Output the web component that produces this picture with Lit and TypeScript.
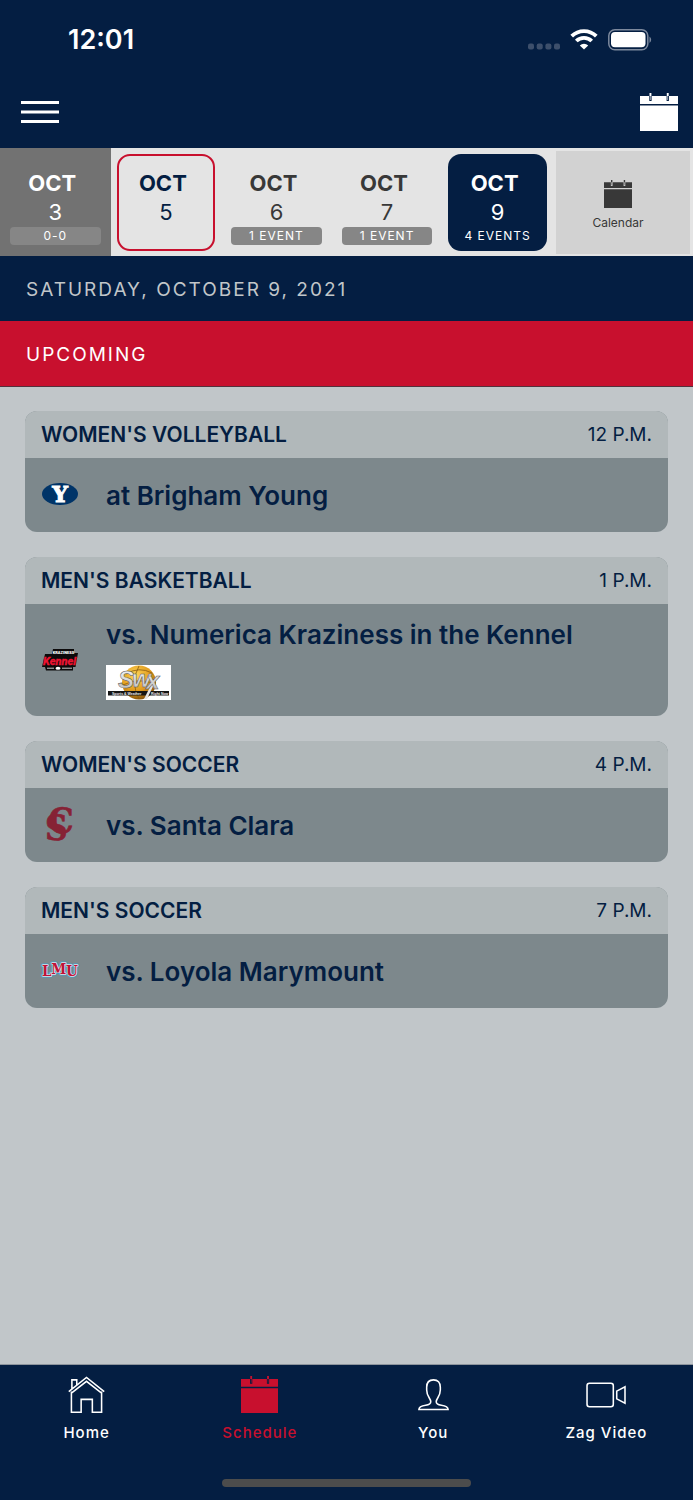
import { LitElement, html, svg, css, nothing, TemplateResult } from "lit";
import { customElement, property, state } from "lit/decorators.js";
import { classMap } from "lit/directives/class-map.js";

interface Day {
  month: string;
  date: number;
  note: string;
  kind: "past" | "today" | "plain";
}

interface Game {
  sport: string;
  time: string;
  opponent: string;
  logo: TemplateResult;
  network?: TemplateResult;
}

const days: Day[] = [
  { month: "OCT", date: 3, note: "0-0", kind: "past" },
  { month: "OCT", date: 5, note: "", kind: "today" },
  { month: "OCT", date: 6, note: "1 EVENT", kind: "plain" },
  { month: "OCT", date: 7, note: "1 EVENT", kind: "plain" },
  { month: "OCT", date: 9, note: "4 EVENTS", kind: "plain" },
];

const calendarShape = svg`
  <path fill="currentColor" d="M0 3H9.300V8H11.600V3H26.600V8H28.900V3H38V11H0ZM0 12.500H38V38H0Z"/>
  <path fill="currentColor" d="M9.500 0H11.400V3H9.500ZM26.800 0H28.700V3H26.800ZM10.200 3H10.700V7H10.200ZM27.500 3H28V7H27.500Z"/>`;

const byuLogo = html`
  <svg viewBox="0 0 36 36" role="img" aria-label="Brigham Young">
    <ellipse cx="18" cy="17" rx="18" ry="11" fill="#003468" />
    <text x="18" y="24.600" text-anchor="middle" font-family="DejaVu Serif" font-weight="700"
      font-size="22" fill="#fff" stroke="#fff" stroke-width="1">Y</text>
  </svg>`;

const kennelLogo = html`
  <svg viewBox="0 0 36 36" role="img" aria-label="Kraziness in the Kennel">
    <path d="M11 7H32V11H36L33.500 25H31V28.500H4L3 25H0L3 12H10Z" fill="#0c0a0b" />
    <text x="21.500" y="12" text-anchor="middle" font-family="Roboto" font-weight="900"
      font-size="4" fill="#fff">KRAZINESS</text>
    <text x="17.500" y="23" text-anchor="middle" font-family="Roboto"
      font-weight="700" font-style="italic" font-size="11" fill="#ee1433" stroke="#ee1433"
      stroke-width="0.400">Kennel</text>
    <path d="M5 26.200H12M20 26.200H30" stroke="#c9c9c9" stroke-width="1" />
    <ellipse cx="16" cy="26.200" rx="2.500" ry="1.500" fill="#fff" />
  </svg>`;

const santaClaraLogo = html`
  <svg viewBox="0 0 36 36" role="img" aria-label="Santa Clara">
    <text x="6.500 3" y="26 33" font-family="DejaVu Serif Condensed, DejaVu Serif" font-weight="700"
      font-size="35" fill="#862235" stroke="#862235" stroke-width="0.600">CS</text>
  </svg>`;

const lmuLogo = html`
  <svg viewBox="0 0 36 36" role="img" aria-label="Loyola Marymount">
    <g font-family="DejaVu Serif Condensed, DejaVu Serif" font-weight="700" font-size="15"
      fill="#c01238" stroke-linejoin="round">
      <text x="0 9.300 24" y="22.500 21 22.500" stroke="#3f9fc4" stroke-width="3" aria-hidden="true">LMU</text>
      <text x="0 9.300 24" y="22.500 21 22.500" stroke="#e3dfe6" stroke-width="1.400"
        paint-order="stroke">LMU</text>
    </g>
  </svg>`;

const swxLogo = html`
  <svg viewBox="0 0 65 35" role="img" aria-label="SWX">
    <defs>
      <radialGradient id="ball" cx="0.400" cy="0.300" r="0.750">
        <stop offset="0" stop-color="#ffd75a" />
        <stop offset="0.600" stop-color="#e09a1c" />
        <stop offset="1" stop-color="#7a4a08" />
      </radialGradient>
      <linearGradient id="steel" x1="0" y1="0" x2="0" y2="1">
        <stop offset="0" stop-color="#ffffff" />
        <stop offset="1" stop-color="#b4b4b4" />
      </linearGradient>
    </defs>
    <rect width="65" height="35" fill="#fff" />
    <circle cx="33" cy="17.500" r="17" fill="url(#ball)" />
    <path d="M20 9Q33 1 46 8M17 20Q33 12 49 19M33 1Q24 17 33 34" fill="none" stroke="#8a5a10" stroke-width="0.800" />
    <rect x="2" y="26" width="61" height="4.500" fill="#141414" />
    <path d="M50 15L41 34H38L46 18Z" fill="#e4e4e4" />
    <text x="12 26 40" y="23 22 24" font-family="Liberation Sans" font-weight="700" font-style="italic"
      font-size="24" fill="url(#steel)" stroke="#555" stroke-width="0.500">Swx</text>
    <g font-family="Liberation Sans" font-weight="700" font-size="3.500" fill="#eee">
      <text x="6" y="29.500">Sports &amp; Weather</text>
      <text x="45" y="29.500">Right Now</text>
    </g>
  </svg>`;

const games: Game[] = [
  { sport: "WOMEN'S VOLLEYBALL", time: "12 P.M.", opponent: "at Brigham Young", logo: byuLogo },
  {
    sport: "MEN'S BASKETBALL",
    time: "1 P.M.",
    opponent: "vs. Numerica Kraziness in the Kennel",
    logo: kennelLogo,
    network: swxLogo,
  },
  { sport: "WOMEN'S SOCCER", time: "4 P.M.", opponent: "vs. Santa Clara", logo: santaClaraLogo },
  { sport: "MEN'S SOCCER", time: "7 P.M.", opponent: "vs. Loyola Marymount", logo: lmuLogo },
];

const tabs = [
  {
    label: "Home",
    icon: html`<svg viewBox="0 0 38 38" fill="none" stroke="currentColor" stroke-width="1.600">
      <path d="M0.800 16 19 1.500 37.200 16M3.500 16V37.200H13.500V24H25V37.200H34.500V16M3.500 17.500 19 5.500 34.500 17.500M4 13V4H9V9" />
    </svg>`,
  },
  { label: "Schedule", icon: html`<svg viewBox="0 0 38 38">${calendarShape}</svg>` },
  {
    label: "You",
    icon: html`<svg viewBox="0 0 38 38" fill="none" stroke="currentColor" stroke-width="1.600">
      <path d="M4 34.500H34C34 32 31 30.500 27 30C23 29.500 21.800 28 21.800 26.500C21.800 22.500 26 21.500 26 14.500V11.500C26 6.500 23.500 4 19 4C14.500 4 12 6.500 12 11.500V14.500C12 21.500 16.200 22.500 16.200 26.500C16.200 28 15 29.500 11 30C7 30.500 4 32 4 34.500Z" />
    </svg>`,
  },
  {
    label: "Zag Video",
    icon: html`<svg class="wide" viewBox="0 0 42 38" fill="none" stroke="currentColor" stroke-width="1.600">
      <rect x="1" y="7.500" width="27" height="24" rx="2.500" />
      <path d="M31.500 15.500 40 11V28L31.500 23.500Z" />
    </svg>`,
  },
];

@customElement("day-strip")
class DayStrip extends LitElement {
  @state() private selected = 9;

  static styles = css`
    :host {
      display: grid;
      grid-template-columns: repeat(5, 15fr) 19fr;
      height: 108px;
      background: #e4e4e4;
      color: #383838;
    }
    button {
      appearance: none;
      border: 0;
      padding: 0;
      margin: 0;
      background: none;
      color: inherit;
      font: inherit;
      cursor: pointer;
      min-width: 0;
    }
    .day {
      padding: 6px 6px 5px;
    }
    .past {
      background: #727272;
      color: #fff;
    }
    .frame {
      box-sizing: border-box;
      height: 97px;
      border: 2px solid transparent;
      border-radius: 13px;
      padding: 12px 2px 0;
      display: flex;
      flex-direction: column;
    }
    .today .frame {
      border-color: #c8102e;
      color: #041e42;
    }
    .selected .frame {
      background: #041e42;
      color: #fff;
    }
    .month {
      padding-right: 6px;
      font-size: 22px;
      line-height: 30px;
      font-weight: 700;
    }
    .date {
      font-size: 22px;
      line-height: 29px;
    }
    .note {
      border-radius: 4px;
      background: #868686;
      color: #fff;
      font-size: 12px;
      line-height: 18px;
      letter-spacing: 1px;
    }
    .selected .note {
      background: none;
    }
    .calendar {
      margin: 3px 3px 2px;
      padding: 6px 10px 0 0;
      background: #d2d2d2;
      display: flex;
      flex-direction: column;
      align-items: center;
      justify-content: center;
      gap: 6px;
      font-size: 12px;
      line-height: 18px;
    }
    .calendar svg {
      width: 28px;
      height: 28px;
    }
  `;

  render() {
    return html`
      ${days.map(
        (d) => html`<button
          class=${classMap({ day: true, [d.kind]: true, selected: d.date === this.selected })}
          @click=${() => (this.selected = d.date)}
        >
          <span class="frame">
            <span class="month">${d.month}</span>
            <span class="date">${d.date}</span>
            ${d.note ? html`<span class="note">${d.note}</span>` : nothing}
          </span>
        </button>`
      )}
      <button class="calendar">
        <svg viewBox="0 0 38 38" aria-hidden="true">${calendarShape}</svg>
        <span>Calendar</span>
      </button>
    `;
  }
}

@customElement("game-card")
class GameCard extends LitElement {
  @property({ attribute: false }) game!: Game;

  static styles = css`
    :host {
      display: block;
    }
    .card {
      border-radius: 12px;
      overflow: hidden;
      background: #7d888c;
      color: #041e42;
    }
    .head {
      display: flex;
      justify-content: space-between;
      align-items: center;
      padding: 1px 16px 0;
      line-height: 46px;
      font-size: 19px;
      background: #b1b8ba;
    }
    .sport {
      margin: 0;
      font-size: 21px;
      font-weight: 600;
    }
    .body {
      display: flex;
      align-items: center;
      gap: 28px;
      min-height: 74px;
      padding: 0 17px;
    }
    .logo {
      display: flex;
      flex: none;
      width: 36px;
      height: 36px;
    }
    .logo svg {
      width: 36px;
      height: 36px;
      overflow: visible;
    }
    .info {
      display: flex;
      flex-direction: column;
      gap: 14px;
    }
    .broadcast .info {
      padding: 14px 0 16px;
    }
    .opponent {
      margin: 0;
      font-size: 26px;
      line-height: 33px;
      font-weight: 600;
    }
    .network {
      display: flex;
      width: 65px;
      height: 35px;
    }
    .network svg {
      width: 65px;
      height: 35px;
    }
  `;

  render() {
    const g = this.game;
    return html`
      <article class="card">
        <header class="head">
          <h2 class="sport">${g.sport}</h2>
          <span>${g.time}</span>
        </header>
        <div class=${classMap({ body: true, broadcast: !!g.network })}>
          <span class="logo">${g.logo}</span>
          <div class="info">
            <p class="opponent">${g.opponent}</p>
            ${g.network ? html`<span class="network">${g.network}</span>` : nothing}
          </div>
        </div>
      </article>
    `;
  }
}

@customElement("app-root")
class AppRoot extends LitElement {
  static styles = css`
    :host {
      display: flex;
      flex-direction: column;
      min-height: 100vh;
      background: #c1c6c9;
      color: #fff;
      font-family: Inter, "Liberation Sans", sans-serif;
    }
    .status {
      box-sizing: border-box;
      height: 80px;
      padding: 0 40px 0 68px;
      display: flex;
      align-items: center;
      justify-content: space-between;
      background: #041e42;
    }
    .clock {
      font-size: 27px;
      line-height: 32px;
      font-weight: 600;
    }
    .signals {
      display: flex;
      align-items: center;
      gap: 10px;
    }
    .toolbar {
      box-sizing: border-box;
      display: flex;
      justify-content: space-between;
      align-items: center;
      height: 68px;
      padding: 0 15px 4px 21px;
      background: #041e42;
    }
    .tool {
      display: flex;
      appearance: none;
      border: 0;
      padding: 0;
      background: none;
      color: inherit;
      cursor: pointer;
    }
    .band {
      margin: 0;
      padding: 2px 26px 0;
      font-size: 19px;
      line-height: 63px;
      font-weight: 400;
      letter-spacing: 2px;
      background: #041e42;
      color: #c1c6c9;
    }
    .upcoming {
      background: #c8102e;
      color: #fff;
      border-bottom: 1px solid #54303c;
    }
    .games {
      flex: 1;
      display: flex;
      flex-direction: column;
      gap: 25px;
      padding: 24px 25px;
    }
    .bottom {
      background: #041e42;
      border-top: 1px solid #8d949c;
      display: flex;
      flex-direction: column;
      align-items: center;
      gap: 35px;
      padding: 11px 0 13px;
    }
    .tabs {
      align-self: stretch;
      display: grid;
      grid-template-columns: repeat(4, 1fr);
    }
    .tab {
      display: flex;
      flex-direction: column;
      align-items: center;
      gap: 9px;
      font-size: 15px;
      line-height: 22px;
      font-weight: 500;
      letter-spacing: 1px;
      color: #fff;
      text-decoration: none;
    }
    .tab svg {
      width: 37px;
      height: 37px;
    }
    .tab .wide {
      width: 41px;
    }
    .active {
      color: #c8102e;
    }
    .indicator {
      width: 36%;
      height: 8px;
      border-radius: 4px;
      background: #4c4c4c;
    }
  `;

  render() {
    return html`
      <div class="status">
        <span class="clock">12:01</span>
        <div class="signals">
          <svg width="32" height="24" viewBox="0 0 32 24" aria-hidden="true">
            <g fill="#3d4f6b">
              <rect x="0" y="15.500" width="6" height="6" rx="2" />
              <rect x="8.700" y="15.500" width="6" height="6" rx="2" />
              <rect x="17.400" y="15.500" width="6" height="6" rx="2" />
              <rect x="26" y="15.500" width="6" height="6" rx="2" />
            </g>
          </svg>
          <svg width="28" height="22" viewBox="0 0 28 22" aria-hidden="true">
            <g fill="none" stroke="#fff" stroke-width="3.800">
              <path d="M1.700 7.200A17.500 17.500 0 0 1 26.300 7.200" />
              <path d="M6.300 12A11 11 0 0 1 21.700 12" />
            </g>
            <path fill="#fff" d="M14 20.500 9.800 16.400A6 6 0 0 1 18.200 16.400Z" />
          </svg>
          <svg width="45" height="22" viewBox="0 0 45 22" aria-hidden="true">
            <rect x="0.800" y="0.800" width="39" height="20" rx="6" fill="none" stroke="#7d899d" stroke-width="1.500" />
            <rect x="3" y="3" width="34.500" height="15.200" rx="4" fill="#fff" />
            <path d="M41.500 7.500A4 4 0 0 1 41.500 14Z" fill="#7d899d" />
          </svg>
        </div>
      </div>
      <div class="toolbar">
        <button class="tool" aria-label="Menu">
          <svg width="38" height="24" viewBox="0 0 38 24" aria-hidden="true">
            <path d="M0 2.500H38M0 12H38M0 21.500H38" stroke="currentColor" stroke-width="3" />
          </svg>
        </button>
        <button class="tool" aria-label="Calendar">
          <svg width="38" height="38" viewBox="0 0 38 38" aria-hidden="true">${calendarShape}</svg>
        </button>
      </div>
      <day-strip></day-strip>
      <h1 class="band">SATURDAY, OCTOBER 9, 2021</h1>
      <div class="band upcoming">UPCOMING</div>
      <main class="games">${games.map((g) => html`<game-card .game=${g}></game-card>`)}</main>
      <div class="bottom">
        <nav class="tabs">
          ${tabs.map(
            (t) => html`<a class=${classMap({ tab: true, active: t.label === "Schedule" })} href="#">
              ${t.icon}
              <span>${t.label}</span>
            </a>`
          )}
        </nav>
        <div class="indicator"></div>
      </div>
    `;
  }
}
